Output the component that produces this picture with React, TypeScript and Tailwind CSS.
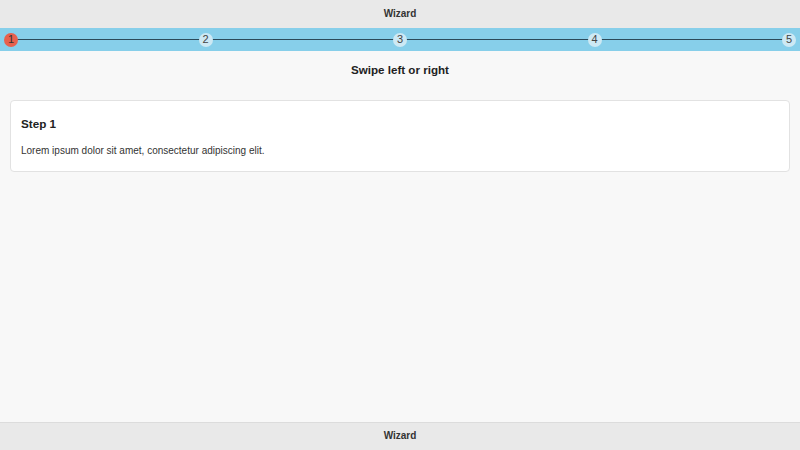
import React from "react";

const steps = [1, 2, 3, 4, 5];

const App: React.FC = () => {
  const current = 1;
  return (
    <div className="w-[800px] h-[450px] flex flex-col bg-[#f8f8f8] text-[#333] font-['Liberation_Sans',Arial,sans-serif]">
      <header className="h-[28px] flex items-center justify-center pb-[2px] bg-[#e9e9e9] text-[10px] font-bold text-[#333]">
        Wizard
      </header>

      <div className="h-[23px] bg-[#87cfea] relative flex items-center justify-between px-[4px]">
        <div className="absolute left-[11px] right-[12px] top-[11px] h-px bg-[#2b4a5a]" />
        {steps.map((s) => (
          <div
            key={s}
            className={`relative w-[14px] h-[14px] rounded-full flex items-center justify-center text-[11px] leading-none ${
              s === current ? "bg-[#e8604c] text-[#333]" : "bg-[#cde9f4] text-[#444]"
            }`}
          >
            {s}
          </div>
        ))}
      </div>

      <main className="flex-1 flex flex-col px-[10px]">
        <h2 className="h-[38px] flex items-center justify-center text-[11.6px] font-bold text-[#222]">
          Swipe left or right
        </h2>
        <div className="mt-[11px] bg-white border border-[#e2e2e2] rounded-[4px] px-[10px] pt-[14px] pb-[13px]">
          <h3 className="text-[11.7px] font-bold text-[#222] leading-[17px]">Step 1</h3>
          <p className="mt-[12px] text-[10px] text-[#333] leading-[14px]">
            Lorem ipsum dolor sit amet, consectetur adipiscing elit.
          </p>
        </div>
      </main>

      <footer className="h-[28px] flex items-center justify-center pb-[2px] bg-[#e9e9e9] border-t border-[#dcdcdc] text-[10px] font-bold text-[#333]">
        Wizard
      </footer>
    </div>
  );
};

export default App;
